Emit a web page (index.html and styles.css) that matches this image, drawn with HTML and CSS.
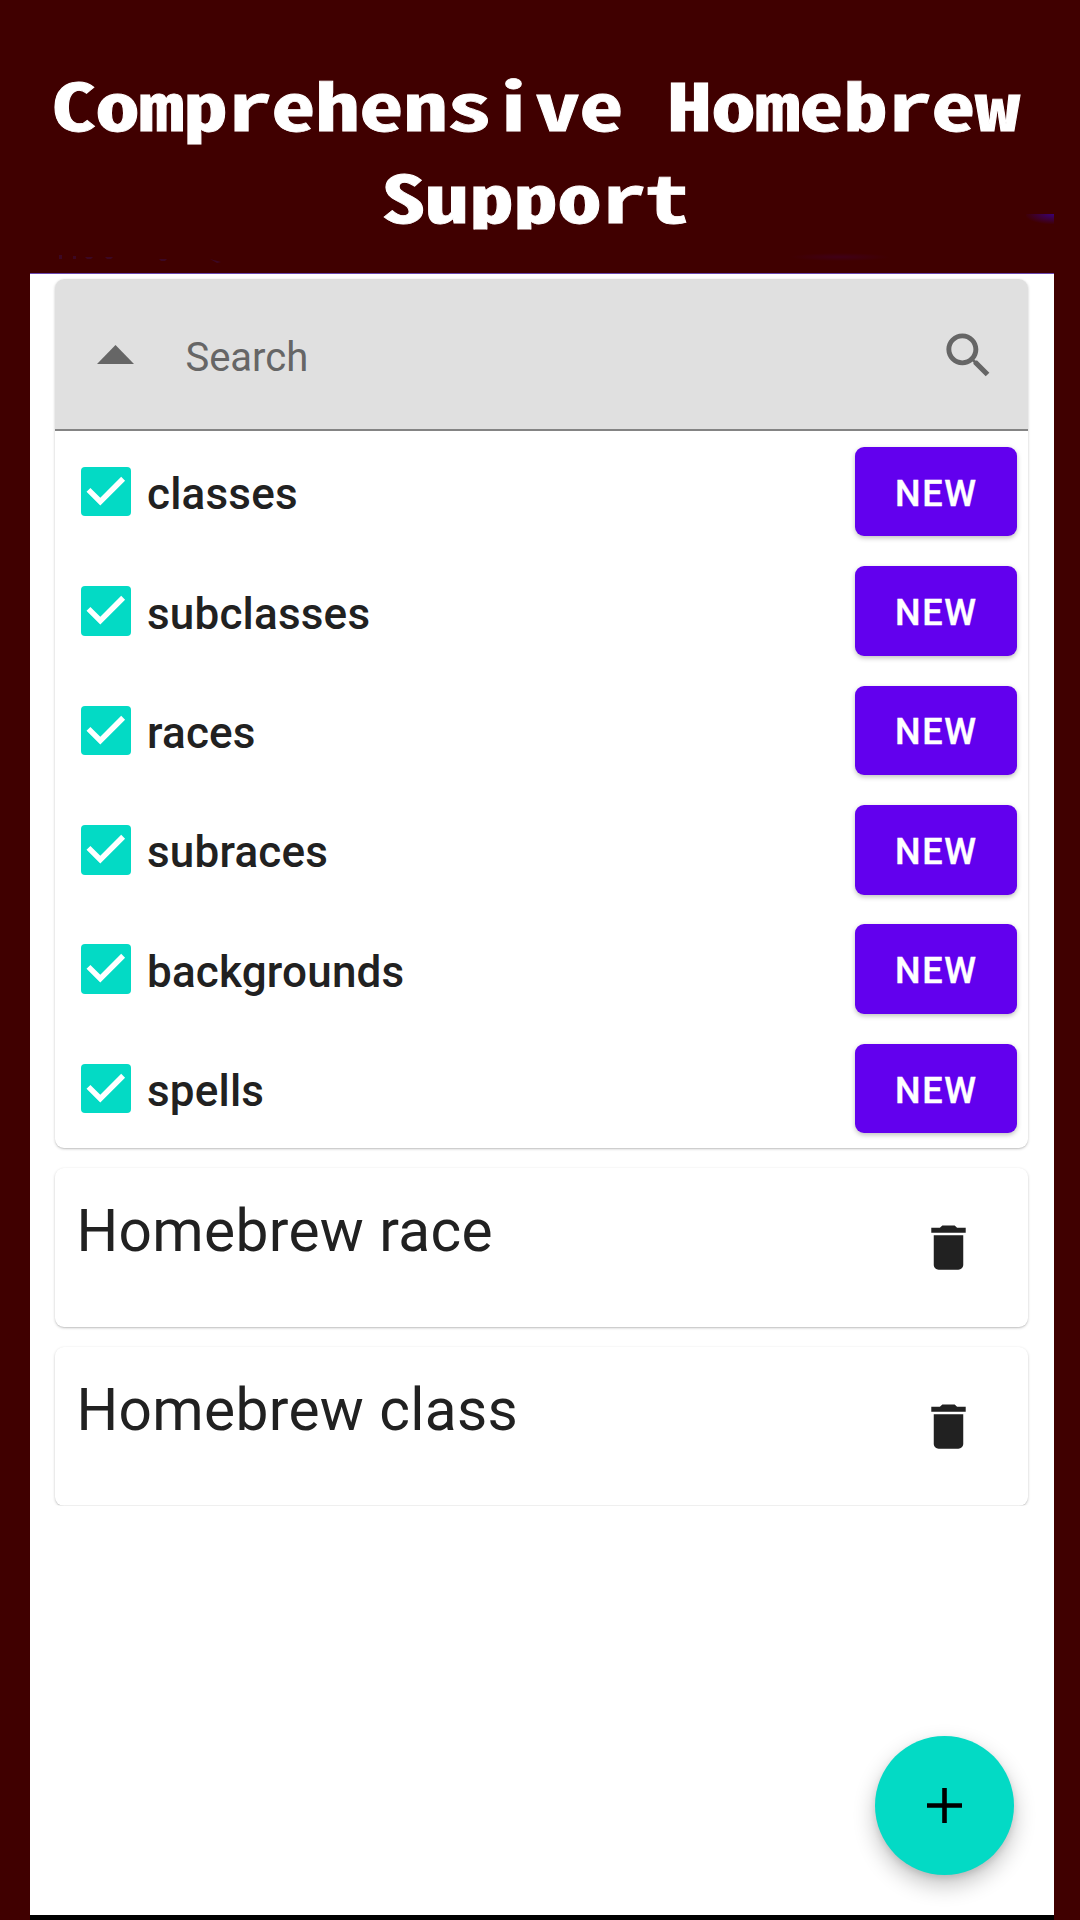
FILE: index.html
```html
<!DOCTYPE html>
<html lang="en">
<head>
<meta charset="utf-8">
<title>Comprehensive Homebrew Support</title>
<link rel="stylesheet" href="styles.css">
</head>
<body>
<svg width="0" height="0" class="defs">
  <symbol id="check" viewBox="3 3 18 18"><path d="M10 17l-5-5 1.41-1.41L10 14.17l7.59-7.59L19 8l-9 9z"/></symbol>
  <symbol id="trash" viewBox="0 0 24 24"><path d="M6 19c0 1.1.9 2 2 2h8c1.1 0 2-.9 2-2V7H6v12zM19 4h-3.5l-1-1h-5l-1 1H5v2h14V4z"/></symbol>
</svg>
<header class="hero">
  <h1 class="title"><span class="line">Comprehensive Homebrew</span><span class="line">Support</span></h1>
  <i class="corner"></i><i class="smudge"></i>
  <svg class="specks" viewBox="0 0 170 8"><path d="M1 0h3v4H1zM15 1h3v3h-3zM27 2h8l-2 2h-4zM47 2h8l-2 2h-4zM101 4h8l-2 2h-4zM152 4l11 3-4 1z"/></svg>
</header>
<main class="screen">
  <section class="card filters">
    <div class="search">
      <svg class="arrow" viewBox="0 0 10 5" preserveAspectRatio="none"><path d="M0 5l5-5 5 5z"/></svg>
      <span class="placeholder">Search</span>
      <svg class="glass" viewBox="0 0 24 24"><path d="M15.5 14h-.79l-.28-.27C15.41 12.59 16 11.11 16 9.5 16 5.91 13.09 3 9.5 3S3 5.91 3 9.5 5.91 16 9.5 16c1.61 0 3.09-.59 4.23-1.57l.27.28v.79l5 4.99L20.49 19l-4.99-5zm-6 0C7.01 14 5 11.99 5 9.5S7.01 5 9.5 5 14 7.01 14 9.5 11.99 14 9.5 14z"/></svg>
    </div>
    <div class="row"><svg class="box"><use href="#check"/></svg><span class="label">classes</span><button class="new">NEW</button></div>
    <div class="row"><svg class="box"><use href="#check"/></svg><span class="label">subclasses</span><button class="new">NEW</button></div>
    <div class="row"><svg class="box"><use href="#check"/></svg><span class="label">races</span><button class="new">NEW</button></div>
    <div class="row"><svg class="box"><use href="#check"/></svg><span class="label">subraces</span><button class="new">NEW</button></div>
    <div class="row"><svg class="box"><use href="#check"/></svg><span class="label">backgrounds</span><button class="new">NEW</button></div>
    <div class="row"><svg class="box"><use href="#check"/></svg><span class="label">spells</span><button class="new">NEW</button></div>
  </section>
  <section class="card item"><span class="name">Homebrew race</span><svg class="trash"><use href="#trash"/></svg></section>
  <section class="card item clipped"><span class="name">Homebrew class</span><svg class="trash"><use href="#trash"/></svg></section>
  <button class="fab" aria-label="Add"><svg viewBox="0 0 35 35"><path d="M15.2 0h4.6v15.2H35v4.6H19.8V35h-4.6V19.8H0v-4.6h15.2z"/></svg></button>
</main>
</body>
</html>
```
FILE: styles.css
```css
* { box-sizing: border-box; }
body {
  margin: 0;
  width: 1080px;
  height: 1920px;
  overflow: hidden;
  background: #400000;
  font-family: Roboto, sans-serif;
  color: #212121;
}
.defs { position: absolute; }
.hero { position: relative; height: 273px; padding-top: 57.4px; }
/* Wide display lettering: the mono face is flattened vertically */
.title {
  margin: 0;
  height: 234.2px;
  overflow: hidden;
  color: #fff;
  font: 700 88px/124.8px "Noto Sans Mono CJK JP", "Liberation Mono", monospace;
  text-align: center;
  white-space: nowrap;
  transform: scaleY(.737);
  transform-origin: 0 0;
  -webkit-text-stroke: 1.1px #fff;
}
.line { display: block; padding-right: 9px; }
.corner {
  position: absolute;
  left: 1026px;
  top: 214px;
  width: 28px;
  height: 10px;
  background: radial-gradient(ellipse at top right, #3a0078, #400000 75%);
}
.smudge {
  position: absolute;
  left: 790px;
  top: 253px;
  width: 100px;
  height: 8px;
  background: radial-gradient(ellipse closest-side, #400018, #400000);
}
.specks { position: absolute; left: 58px; top: 255px; width: 170px; height: 8px; fill: #3c0824; }
.screen {
  position: relative;
  margin-left: 30px;
  width: 1024px;
  height: 1647px;
  padding: 4.5px 26px 0 25.4px;
  background: #fff;
  border-top: 1px solid #6a48b0;
  border-bottom: 5px solid #000;
}
.card {
  border-radius: 9px;
  background: #fff;
  box-shadow: 0 1px 3px rgba(0,0,0,.2), 0 1px 1px rgba(0,0,0,.08);
}
.filters { height: 869.5px; margin-bottom: 19.5px; }
.search {
  display: flex;
  align-items: center;
  height: 152.6px;
  margin-bottom: .9px;
  padding: 0 30px 0 42px;
  background: #e0e0e0;
  border-bottom: 2px solid #848484;
  border-radius: 9px 9px 0 0;
}
.arrow { width: 37px; height: 19px; margin-top: 1px; fill: #666; }
.placeholder { flex: 1; margin-left: 51px; padding-top: 7px; font-size: 40px; color: #666; }
.glass { width: 59px; height: 59px; margin-top: 4px; fill: #666; }
.row { display: flex; align-items: center; height: 119.4px; padding: 0 11px 0 26px; }
.box { width: 49.6px; height: 49.6px; border-radius: 4px; background: #03dac5; fill: #fff; }
.label { flex: 1; margin-left: 16px; padding-top: 5px; font-size: 44px; font-weight: 500; letter-spacing: .2px; }
.new {
  width: 162.5px;
  height: 89.5px;
  padding: 4px 0 0 1px;
  border: 0;
  border-radius: 9px;
  background: #6200ee;
  color: #fff;
  font: 500 36px Roboto, sans-serif;
  letter-spacing: 1.6px;
  -webkit-text-stroke: .4px #fff;
  box-shadow: 0 2px 5px rgba(0,0,0,.25);
}
.item { display: flex; align-items: center; justify-content: space-between; height: 159px; margin-bottom: 20px; padding: 0 50px 0 21px; }
.name { padding-bottom: 32px; font-size: 58.6px; letter-spacing: .36px; }
.trash { width: 59px; height: 59px; margin-top: 1px; fill: #212121; }
.clipped { clip-path: inset(-5px -5px 0 -5px); }
.fab {
  position: absolute;
  left: 844.6px;
  top: 1461.6px;
  width: 139px;
  height: 139px;
  display: flex;
  align-items: center;
  justify-content: center;
  border: 0;
  border-radius: 50%;
  background: #03dac5;
  box-shadow: 0 10px 22px rgba(0,0,0,.24), 0 3px 6px rgba(0,0,0,.1);
}
.fab svg { width: 35px; height: 35px; }
```
